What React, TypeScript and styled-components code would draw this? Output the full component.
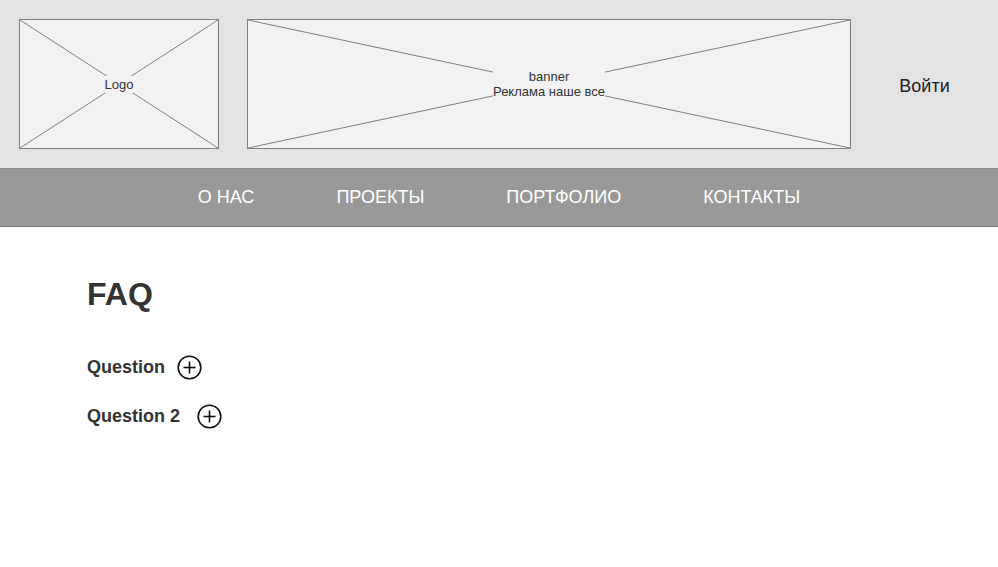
import styled, { createGlobalStyle } from "styled-components";

const GlobalStyle = createGlobalStyle`
  body {
    margin: 0;
    background: #fff;
    font-family: "Liberation Sans", Arial, sans-serif;
  }
`;

const navItems = ["О НАС", "ПРОЕКТЫ", "ПОРТФОЛИО", "КОНТАКТЫ"];
const questions = [
  { text: "Question", gap: 12 },
  { text: "Question 2", gap: 17 },
];

function Cross() {
  return (
    <CrossSvg preserveAspectRatio="none" viewBox="0 0 100 100">
      <line x1="0" y1="0" x2="100" y2="100" vectorEffect="non-scaling-stroke" />
      <line x1="0" y1="100" x2="100" y2="0" vectorEffect="non-scaling-stroke" />
    </CrossSvg>
  );
}

function PlusCircle() {
  return (
    <svg width="25" height="25" viewBox="0 0 25 25" fill="none" stroke="#111" strokeWidth="1.6">
      <circle cx="12.5" cy="12.5" r="11.3" />
      <line x1="6.5" y1="12.5" x2="18.5" y2="12.5" />
      <line x1="12.5" y1="6.5" x2="12.5" y2="18.5" />
    </svg>
  );
}

function App() {
  return (
    <>
      <GlobalStyle />
      <Header>
        <Placeholder $width={200}>
          <Cross />
          <PlaceholderLabel $pad={1}>Logo</PlaceholderLabel>
        </Placeholder>
        <Placeholder $width={604} $offset={28}>
          <Cross />
          <PlaceholderLabel $pad={4}>
            banner
            <br />
            Реклама наше все
          </PlaceholderLabel>
        </Placeholder>
        <Login>Войти</Login>
      </Header>
      <Nav>
        {navItems.map((item) => (
          <NavLink key={item}>{item}</NavLink>
        ))}
      </Nav>
      <Main>
        <Title>FAQ</Title>
        <FaqList>
          {questions.map((q) => (
            <FaqRow key={q.text} $gap={q.gap}>
              <QuestionText>{q.text}</QuestionText>
              <PlusCircle />
            </FaqRow>
          ))}
        </FaqList>
      </Main>
    </>
  );
}

const Header = styled.header`
  display: flex;
  align-items: flex-start;
  height: 169px;
  padding: 19px 0 0 19px;
  box-sizing: border-box;
  background: #e3e3e3;
  border-bottom: 1px solid #8c8c8c;
`;

const Placeholder = styled.div<{ $width: number; $offset?: number }>`
  position: relative;
  width: ${(p) => p.$width}px;
  height: 130px;
  margin-left: ${(p) => p.$offset ?? 0}px;
  box-sizing: border-box;
  border: 1px solid #7f7f7f;
  background: #f2f2f2;
  display: flex;
  align-items: center;
  justify-content: center;
  flex-shrink: 0;
`;

const CrossSvg = styled.svg`
  position: absolute;
  inset: 0;
  width: 100%;
  height: 100%;
  stroke: #808080;
  stroke-width: 1;
`;

const PlaceholderLabel = styled.span<{ $pad: number }>`
  position: relative;
  background: #f2f2f2;
  padding: ${(p) => p.$pad}px 0;
  font-size: 13px;
  line-height: 15px;
  color: #333;
  text-align: center;
`;

const Login = styled.div`
  flex: 1;
  align-self: stretch;
  display: flex;
  align-items: center;
  justify-content: center;
  padding-bottom: 14px;
  font-size: 18px;
  color: #222;
`;

const Nav = styled.nav`
  display: flex;
  justify-content: center;
  align-items: center;
  gap: 82px;
  height: 57px;
  background: #999;
  border-bottom: 1px solid #7a7a7a;
`;

const NavLink = styled.a`
  color: #fff;
  font-size: 18px;
  cursor: pointer;
`;

const Main = styled.main`
  padding: 48px 87px 0;
`;

const Title = styled.h1`
  margin: 0;
  font-size: 32px;
  line-height: 38px;
  font-weight: 700;
  color: #333;
`;

const FaqList = styled.div`
  display: flex;
  flex-direction: column;
  gap: 24px;
  margin-top: 42px;
`;

const FaqRow = styled.div<{ $gap: number }>`
  display: flex;
  align-items: center;
  gap: ${(p) => p.$gap}px;
  height: 25px;
  cursor: pointer;
`;

const QuestionText = styled.span`
  font-size: 18px;
  font-weight: 700;
  color: #333;
`;

export default App;
